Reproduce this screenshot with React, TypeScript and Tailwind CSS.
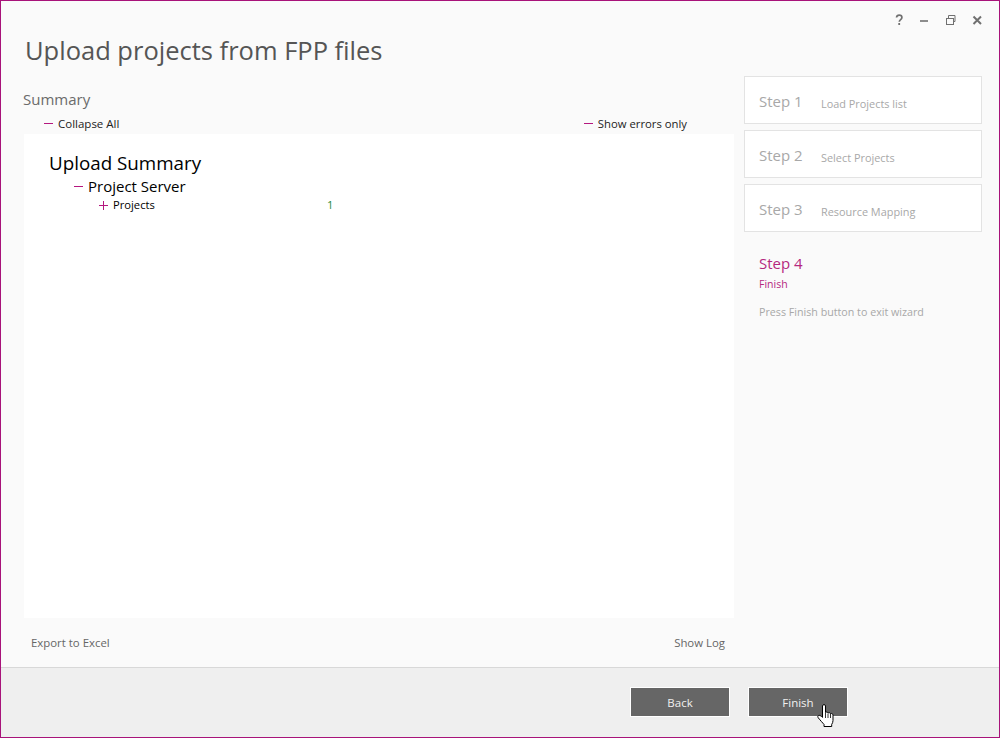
const font = { fontFamily: '"Open Sans", "Noto Sans", sans-serif' }

const steps = [
  { n: "Step 1", label: "Load Projects list" },
  { n: "Step 2", label: "Select Projects" },
  { n: "Step 3", label: "Resource Mapping" },
]

function Minus({ className }: { className: string }) {
  return <span className={`inline-block h-px w-[9px] bg-[#b5177f] ${className}`} />
}

function WindowButtons() {
  return (
    <div className="flex h-[39px] items-start justify-end pt-[12px] pr-[14px]">
      <svg width="95" height="14" viewBox="0 0 95 14" fill="none" stroke="#707070">
        <path d="M6.500 4.500c.2-1.500 1.300-2.300 2.700-2.300 1.600 0 2.700.9 2.700 2.200 0 2.100-2.600 2.200-2.600 4.400" strokeWidth="1.700" />
        <rect x="8.300" y="10" width="1.800" height="2" fill="#707070" stroke="none" />
        <path d="M30 8h8" strokeWidth="1.600" />
        <rect x="56.500" y="5.500" width="7" height="6" strokeWidth="1" />
        <path d="M58.500 5V2.500h6.500v6h-1.500" strokeWidth="1" />
        <path d="M83.500 3.500l7.500 7.500M91 3.500l-7.500 7.500" strokeWidth="2" />
      </svg>
    </div>
  )
}

function HandCursor() {
  return (
    <svg className="absolute left-[68px] top-[16px]" width="19" height="24" viewBox="0 0 19 24">
      <path
        d="M5.500 2c0-1.900 3-1.900 3 0v6.500c.8-.7 2.200-.5 2.600.5.9-.6 2.100-.3 2.500.7.9-.5 2.400 0 2.400 1.400v5.400c0 1.700-.6 2.700-1.300 3.900v2.100H7v-2.100C5.700 19 3.400 16.400 1.400 14c-.8-1-.8-2 0-2.500.9-.6 2.400.2 4.100 1.900V2z"
        fill="#fff"
        stroke="#000"
        strokeWidth="1"
      />
      <path d="M8.500 9v5M11 9.500V14M13.500 10v4" stroke="#000" strokeWidth="0.800" />
    </svg>
  )
}

export default function App() {
  return (
    <div
      className="flex h-[738px] w-[1000px] flex-col overflow-hidden border border-[#a8137a] bg-[#fafafa]"
      style={font}
    >
      <WindowButtons />
      <h1 className="ml-[24px] h-[36px] text-[25.500px] leading-[21px] text-[#555555]">Upload projects from FPP files</h1>

      <div className="flex flex-1">
        <div className="ml-[22px] w-[711px]">
          <h2 className="h-[37px] pt-[13px] text-[15px] leading-[20px] text-[#6b6b6b]">Summary</h2>
          <div className="mb-px flex h-[20px] items-center justify-between pt-px pr-[47px] pl-[21px] text-[11.300px] leading-[16px] text-[#222222]">
            <div className="flex items-center gap-[5px]">
              <Minus className="" />
              <span className="text-[11.500px]">Collapse All</span>
            </div>
            <div className="flex items-center gap-[5px]">
              <Minus className="" />
              Show errors only
            </div>
          </div>
          <div className="ml-px h-[484px] bg-white pt-[16px] pl-[25px] text-black">
            <div className="text-[18.800px] leading-[26px]">Upload Summary</div>
            <div className="flex items-center pl-[25px] text-[15px] leading-[20px]">
              <Minus className="mr-[5px]" />
              Project Server
            </div>
            <div className="mt-px flex h-[17px] items-center pl-[50px] text-[11.200px]">
              <span className="relative mr-[5px] h-[9px] w-[9px]">
                <Minus className="absolute top-[4px] left-0" />
                <span className="absolute top-0 left-[4px] h-[9px] w-px bg-[#b5177f]" />
              </span>
              <span className="w-[214px]">Projects</span>
              <span className="text-[#1f8a3d]">1</span>
            </div>
          </div>
          <div className="flex h-[49px] items-center justify-between pr-[9px] pl-[8px] text-[11.400px] text-[#666666]">
            <span>Export to Excel</span>
            <span>Show Log</span>
          </div>
        </div>

        <div className="ml-[10px] w-[238px]">
          <div className="flex flex-col gap-[6px]">
            {steps.map((s) => (
              <div key={s.n} className="flex h-[48px] items-baseline border border-[#e3e3e3] bg-white pt-[14px] pl-[14px]">
                <span className="w-[62px] text-[15px] leading-[20px] text-[#a8a8a8]">{s.n}</span>
                <span className="translate-y-px text-[10.900px] text-[#a8a8a8]">{s.label}</span>
              </div>
            ))}
          </div>
          <div className="pt-[21px] pl-[15px]">
            <div className="text-[15px] leading-[20px] text-[#b5287f]">Step 4</div>
            <div className="mt-[3px] text-[10.500px] leading-[16px] text-[#b5287f]">Finish</div>
            <div className="mt-[12px] text-[10.700px] leading-[16px] text-[#a8a8a8]">Press Finish button to exit wizard</div>
          </div>
        </div>
      </div>

      <div className="flex h-[70px] items-start justify-end gap-[18px] border-t border-[#d8d8d8] bg-[#efefef] pt-[19px] pr-[151px]">
        <button className="h-[30px] w-[100px] border border-white bg-[#666666] pt-[2px] text-[11.500px] text-[#f0f0f0]">Back</button>
        <button className="relative h-[30px] w-[100px] border border-white bg-[#666666] pt-[2px] text-[11.500px] text-[#f0f0f0]">
          Finish
          <HandCursor />
        </button>
      </div>
    </div>
  )
}
